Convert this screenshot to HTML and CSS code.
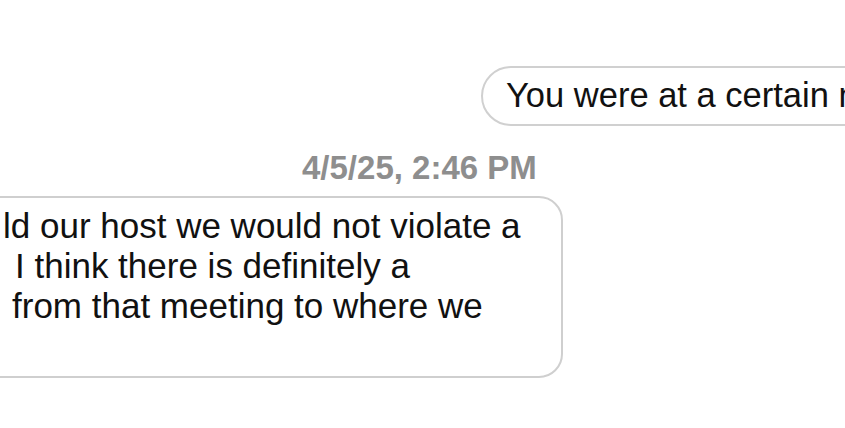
FILE: index.html
```html
<!DOCTYPE html>
<html>
<head>
<meta charset="utf-8">
<link rel="stylesheet" href="styles.css">
</head>
<body>
<div class="chat">
  <div class="row row-out">
    <div class="bubble bubble-out">You were at a certain meeting</div>
  </div>
  <div class="stamp">4/5/25, 2:46 PM</div>
  <div class="row row-in">
    <div class="bubble bubble-in">
      <div class="line l1">ld our host we would not violate a</div>
      <div class="line l2">I think there is definitely a</div>
      <div class="line l3">from that meeting to where we</div>
      <div class="line l4">&nbsp;</div>
    </div>
  </div>
</div>
</body>
</html>
```

FILE: styles.css
```css
html, body {
  margin: 0;
  padding: 0;
  background: #ffffff;
  overflow: hidden;
  width: 845px;
  height: 428px;
}
.chat {
  display: flex;
  flex-direction: column;
  font-family: "Liberation Sans", Arial, sans-serif;
  color: #111111;
}
.row {
  display: flex;
}
.row-out {
  padding-top: 66px;
  padding-left: 481px;
}
.bubble {
  background: #ffffff;
  box-sizing: border-box;
  white-space: nowrap;
}
.bubble-out {
  height: 60px;
  border: 2px solid #d0d0d0;
  border-radius: 30px;
  padding: 0 0 0 23px;
  font-size: 34.5px;
  line-height: 55px;
  width: 600px;
  flex: none;
}
.stamp {
  margin-top: 24px;
  padding-left: 302px;
  font-size: 33px;
  font-weight: bold;
  color: #8e8e8e;
  line-height: 36px;
}
.row-in {
  margin-top: 10px;
}
.bubble-in {
  margin-left: -60px;
  width: 623px;
  height: 182px;
  border: 2px solid #cfcfcf;
  border-radius: 24px;
  padding: 8px 0 0 61px;
  font-size: 35px;
  line-height: 40px;
  flex: none;
}
.l2 { padding-left: 12px; }
.l3 { padding-left: 9px; }
```
